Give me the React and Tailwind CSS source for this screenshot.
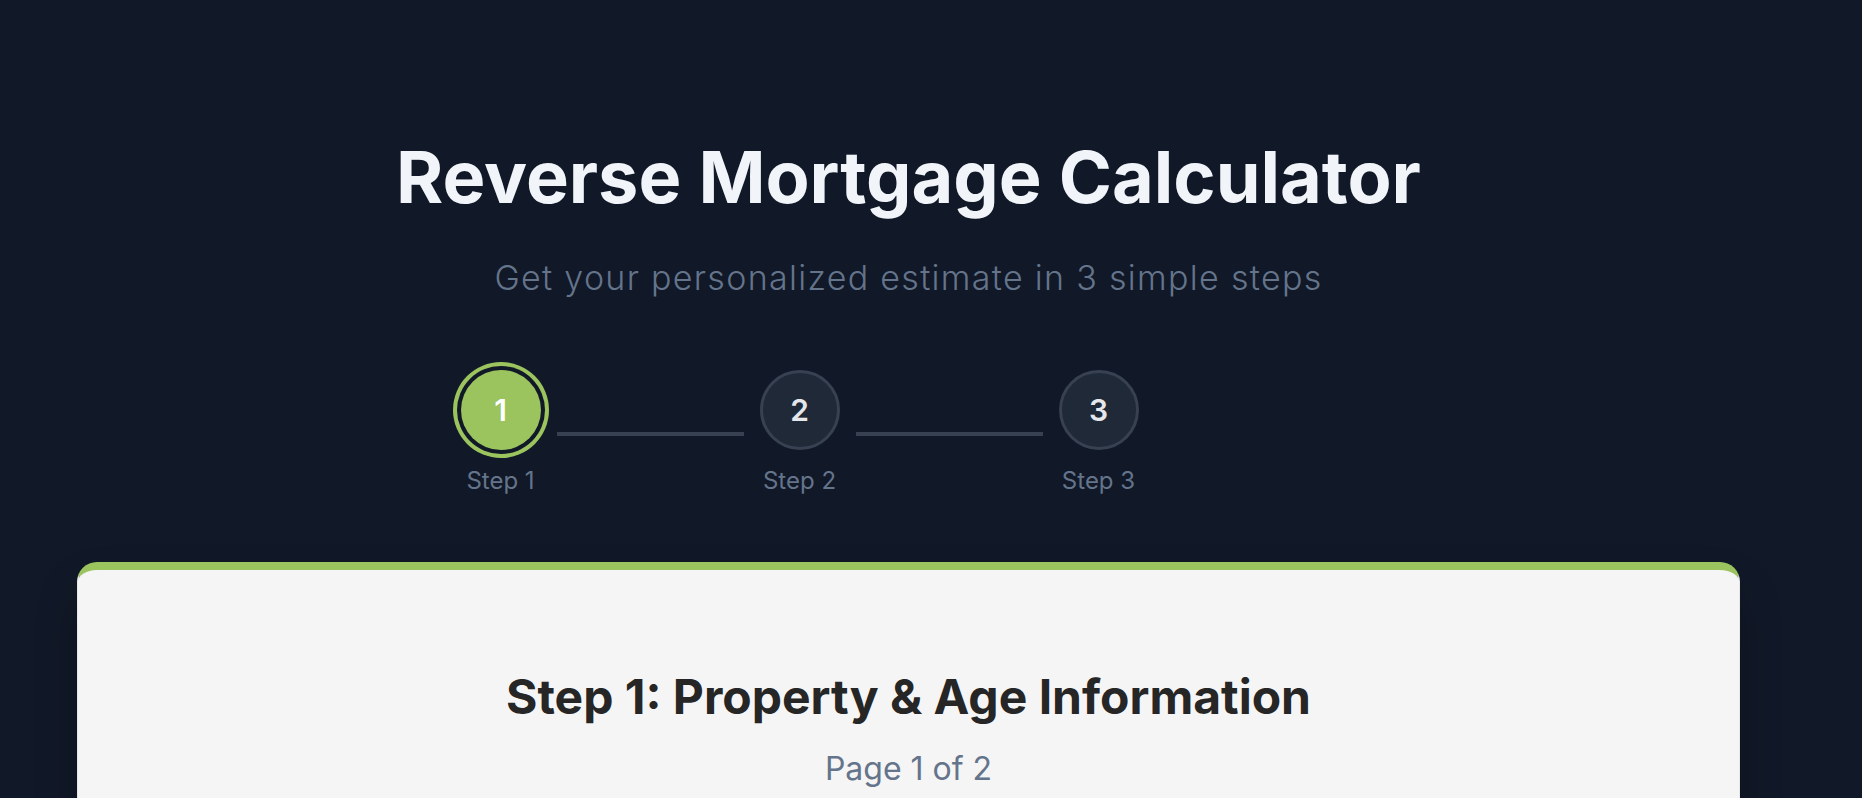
import React from 'react';

const steps = [1, 2, 3];

const StepDot = ({ n, active }) => (
  <div className="flex w-20 flex-col items-center">
    {active ? (
      <div className="flex h-20 w-20 items-center justify-center rounded-full bg-[#9bc45f] text-[30px] font-semibold text-white ring-4 ring-[#9bc45f] ring-offset-4 ring-offset-[#111827]">
        {n}
      </div>
    ) : (
      <div className="flex h-20 w-20 items-center justify-center rounded-full border-[3px] border-[#374151] bg-[#1f2937] text-[30px] font-semibold text-[#e5e7eb]">
        {n}
      </div>
    )}
    <span className="mt-[15px] whitespace-nowrap text-2xl leading-8 text-[#64748b]">Step {n}</span>
  </div>
);

export default function App() {
  return (
    <div className="h-[798px] overflow-hidden bg-[#111827] font-['Inter',sans-serif]">
      <div className="pl-[77px] pr-[122px] pt-[141px]">
        <h1 className="text-center text-[72px] font-bold leading-none text-[#f1f5f9]">
          Reverse Mortgage Calculator
        </h1>
        <p className="mt-[41px] text-center text-[34px] font-light leading-[48px] tracking-[1.3px] text-[#64748b]">
          Get your personalized estimate in 3 simple steps
        </p>

        <div className="mx-auto mt-[68px] flex max-w-4xl items-center">
          {steps.map((n, i) => (
            <React.Fragment key={n}>
              <StepDot n={n} active={n === 1} />
              {i < steps.length - 1 && <div className="mx-4 h-1 w-[187px] bg-[#374151]" />}
            </React.Fragment>
          ))}
        </div>

        <div className="mt-[65px] rounded-[20px] border-x border-t-8 border-x-[#e5e7eb] border-t-[#9bc45f] bg-[#f5f5f5] pb-20 pt-[103px] shadow-2xl shadow-black/40">
          <h2 className="text-center text-5xl font-bold leading-none text-[#262626]">
            Step 1: Property &amp; Age Information
          </h2>
          <p className="mt-6 text-center text-[32px] leading-[48px] text-[#64748b]">Page 1 of 2</p>
        </div>
      </div>
    </div>
  );
}
